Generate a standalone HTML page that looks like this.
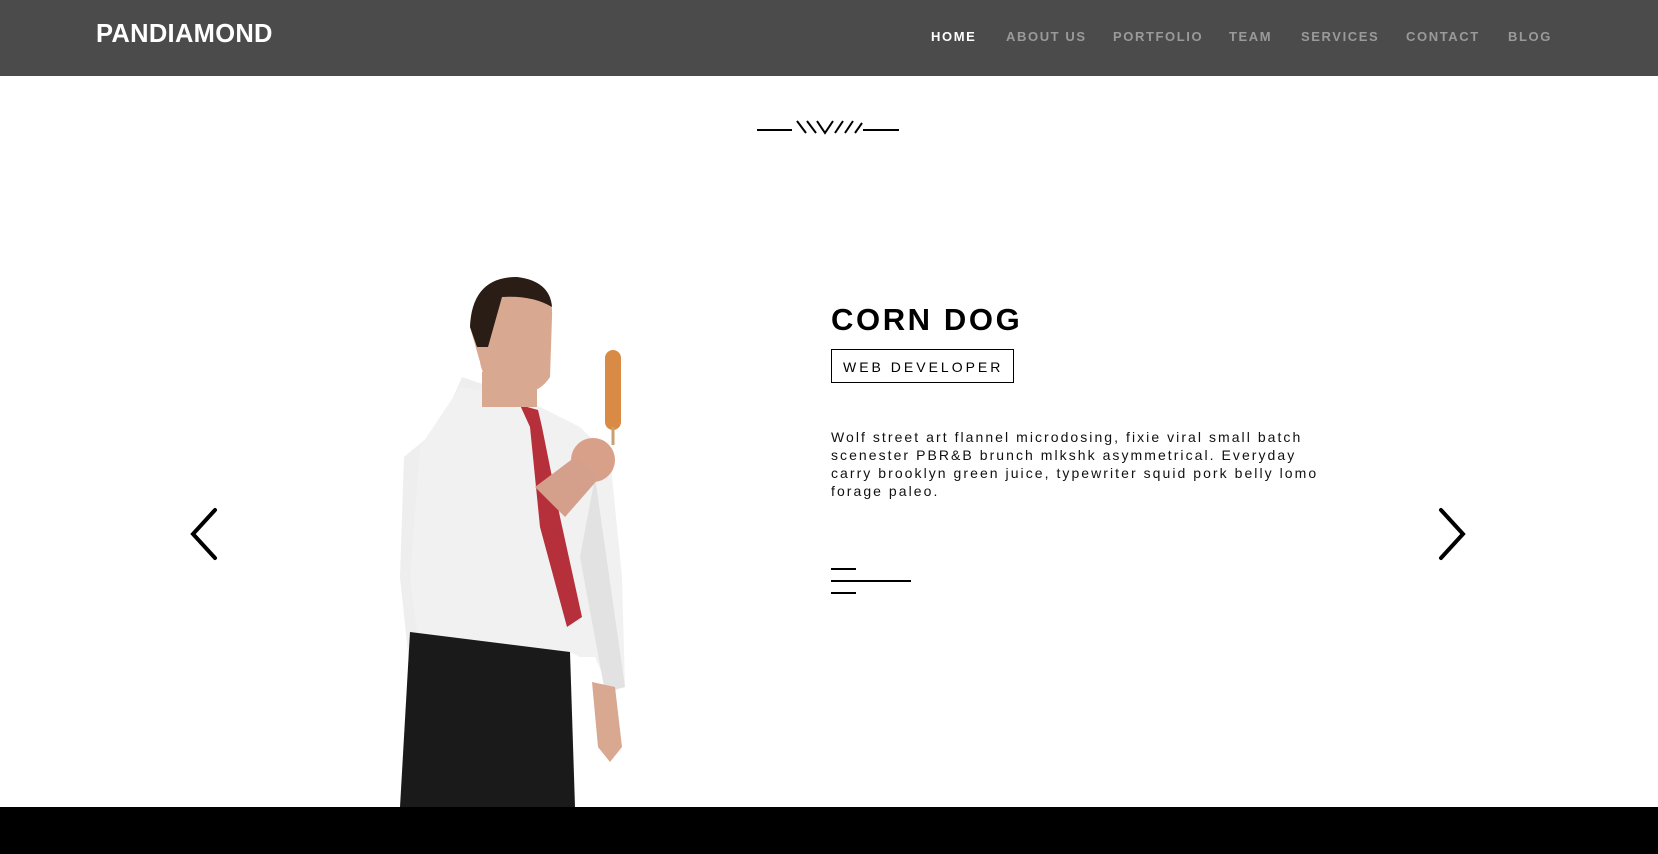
<!DOCTYPE html>
<html><head><meta charset="utf-8"><style>
*{margin:0;padding:0;box-sizing:border-box}
html,body{width:1658px;height:854px;overflow:hidden;background:#fff;font-family:"Liberation Sans",sans-serif}
.hdr{position:absolute;left:0;top:0;width:1658px;height:76px;background:#4b4b4b}
.logo{position:absolute;left:96px;top:20px;color:#fff;font-weight:bold;font-size:25.5px;letter-spacing:0.3px}
.nav{position:absolute;top:29px;font-size:13px;font-weight:bold;letter-spacing:1.6px;color:#9a9a9a}
.foot{position:absolute;left:0;top:807px;width:1658px;height:47px;background:#000}
.title{position:absolute;left:831px;top:302px;font-size:31px;font-weight:bold;letter-spacing:2.6px;color:#000}
.box{position:absolute;left:831px;top:349px;width:183px;height:34px;border:1px solid #000;font-size:14px;letter-spacing:3px;padding:9px 0 0 11px;color:#000}
.p{position:absolute;left:831px;top:428px;width:492px;font-size:14px;line-height:18px;letter-spacing:2.05px;color:#111}
.ln{position:absolute;background:#000;height:2px}
</style></head><body>
<div class="hdr">
<div class="logo">PANDIAMOND</div>
<div class="nav" style="left:931px;color:#fff">HOME</div>
<div class="nav" style="left:1006px">ABOUT US</div>
<div class="nav" style="left:1113px">PORTFOLIO</div>
<div class="nav" style="left:1229px">TEAM</div>
<div class="nav" style="left:1301px">SERVICES</div>
<div class="nav" style="left:1406px">CONTACT</div>
<div class="nav" style="left:1508px">BLOG</div>
</div>
<svg style="position:absolute;left:756px;top:118px" width="144" height="20" stroke="#000" stroke-width="2" fill="none">
<line x1="1" y1="12" x2="36" y2="12"/><line x1="107" y1="12" x2="143" y2="12"/>
<path d="M41 3 L50 15 M51 3 L60 15 M61 3 L69 15 L77 3 M79 15 L87 3 M89 15 L97 3 M99 15 L106 5"/>
</svg>
<svg style="position:absolute;left:400px;top:277px" width="262" height="530">
<path d="M62 100 L40 150 L4 180 L0 300 L10 395 L30 395 L60 300 L100 250 L120 230 L135 150 L120 120 Z" fill="#eee"/>
<path d="M60 110 L120 120 L180 150 L210 180 L222 300 L225 410 L210 415 L195 380 L180 380 L170 375 L20 380 L10 300 L20 170 Z" fill="#f1f1f1"/>
<path d="M195 200 L225 410 L205 415 L180 280 Z" fill="#e2e2e2"/>
<path d="M120 128 L138 133 L142 150 L160 240 L182 340 L167 350 L140 250 L130 150 Z" fill="#b5303a"/>
<rect x="205" y="73" width="16" height="80" rx="8" fill="#d98a45"/>
<line x1="213" y1="150" x2="213" y2="168" stroke="#c9a070" stroke-width="3"/>
<ellipse cx="193" cy="183" rx="22" ry="22" fill="#d9a089"/>
<path d="M135 210 L175 180 L200 200 L165 240 Z" fill="#d4a08c"/>
<path d="M70 50 Q72 0 117 0 Q154 4 152 40 L150 100 Q137 120 112 115 Q84 110 80 85 Z" fill="#d9a890"/>
<path d="M70 50 Q72 0 117 0 Q150 4 152 30 Q132 18 102 20 L88 70 L77 70 Z" fill="#2a1d15"/>
<rect x="82" y="95" width="55" height="35" fill="#d9a890"/>
<path d="M10 355 L170 375 L175 530 L0 530 Z" fill="#1a1a1a"/>
<path d="M192 405 L215 410 L222 470 L210 485 L198 470 Z" fill="#d9a890"/>
</svg>
<svg style="position:absolute;left:186px;top:507px" width="34" height="54" fill="none" stroke="#000" stroke-width="4" stroke-linecap="round"><path d="M29 3 L7 27 L29 51"/></svg>
<svg style="position:absolute;left:1436px;top:507px" width="34" height="54" fill="none" stroke="#000" stroke-width="4" stroke-linecap="round"><path d="M5 3 L27 27 L5 51"/></svg>
<div class="title">CORN DOG</div>
<div class="box">WEB DEVELOPER</div>
<div class="p">Wolf street art flannel microdosing, fixie viral small batch scenester PBR&amp;B brunch mlkshk asymmetrical. Everyday carry brooklyn green juice, typewriter squid pork belly lomo forage paleo.</div>
<div class="ln" style="left:831px;top:568px;width:25px"></div>
<div class="ln" style="left:831px;top:580px;width:80px"></div>
<div class="ln" style="left:831px;top:592px;width:25px"></div>
<div class="foot"></div>
</body></html>
